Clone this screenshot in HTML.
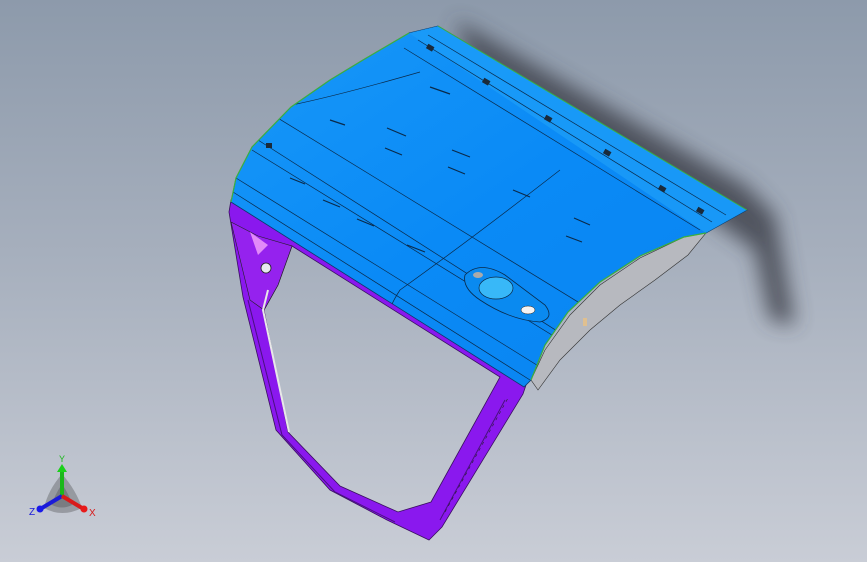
<!DOCTYPE html>
<html><head><style>
html,body{margin:0;padding:0;width:867px;height:562px;overflow:hidden}
body{background:linear-gradient(180deg,#8d9aab 0%,#a6afbd 45%,#c9cdd6 100%)}
svg{position:absolute;left:0;top:0}
</style></head><body>
<svg width="867" height="562" viewBox="0 0 867 562">
<defs>
<filter id="b" x="-50%" y="-50%" width="200%" height="200%"><feGaussianBlur stdDeviation="10"/></filter>
<linearGradient id="pg" x1="0" y1="0" x2="1" y2="1">
<stop offset="0" stop-color="#1898f8"/><stop offset="0.5" stop-color="#0a8af6"/><stop offset="1" stop-color="#0a84f0"/></linearGradient>
<clipPath id="pc"><path d="M231 202 L236 178 L252 147 L291 107 L330 80 L363 60 L409 33 L438 26 L747 210 L706 233 L684 237 L640 256 L600 282 L568 312 L545 345 L531 380 L524 387 Z"/></clipPath>
</defs>
<path d="M455 20 L745 185 L775 215 L795 325 L770 320 L755 250 L720 225 L470 60 Z" fill="#3a3e46" opacity="0.8" filter="url(#b)"/>
<path fill-rule="evenodd" fill="#8a18ee" stroke="#3a1060" stroke-width="0.8" d="M229 212 L231 200 L526 385 L523 394 L442 527 L429 540 L387 520 L330 490 L276 430 L243 297 Z M292 246 L500 377 L431 502 L398 512 L340 486 L288 432 L264 310 L278 285 Z"/>
<path d="M231 222 L258 236 L292 246 L278 285 L264 310 L250 300 Z" fill="#9522ee" stroke="#222" stroke-width="0.6"/>
<path d="M250 232 L268 245 L258 255 Z" fill="#e28af8"/>
<circle cx="266" cy="268" r="5" fill="#e8e8f0" stroke="#222" stroke-width="0.8"/>
<path d="M268 290 L263 310 L289 432" fill="none" stroke="#e8e8e8" stroke-width="2"/>
<path d="M248 300 L282 435 L335 492 L395 522" fill="none" stroke="#4a1080" stroke-width="1"/>
<path d="M440 520 L505 400" fill="none" stroke="#4a1080" stroke-width="1"/>
<path d="M445 512 L508 398" fill="none" stroke="#222" stroke-width="0.6" stroke-dasharray="3 4"/>
<path d="M706 233 L684 237 L640 258 L600 285 L570 315 L545 350 L531 380 L538 390 L560 360 L590 330 L620 305 L655 280 L688 255 Z" fill="#b7b9bf" stroke="#333" stroke-width="0.6"/>
<rect x="583" y="318" width="4" height="8" fill="#e0c090"/>
<path d="M231 202 L236 178 L252 147 L291 107 L330 80 L363 60 L409 33 L438 26 L747 210 L706 233 L684 237 L640 256 L600 282 L568 312 L545 345 L531 380 L524 387 Z" fill="url(#pg)" stroke="#0a3a6a" stroke-width="0.8"/>
<g clip-path="url(#pc)">
<path d="M409 33 L438 26 L747 210 L706 233 Z" fill="#1c9cf8" opacity="0.8"/>
<g stroke="#0a2a4a" stroke-width="0.7" fill="none">
<path d="M418 40 L712 222"/><path d="M428 35 L726 215"/><path d="M404 48 L700 230"/>
<path d="M258 140 L665 400"/>
<path d="M252 150 L560 340 M236 178 L540 367 M233 192 L530 380"/>
<path d="M268 112 L640 340"/>
<path d="M292 105 Q340 95 420 72"/>
<path d="M560 170 Q470 240 400 290 Q380 320 395 330"/>
</g>
<g stroke="#0a2a4a" stroke-width="1.2">
<path d="M330 120 L345 125 M387 128 L406 136 M385 148 L402 155 M452 150 L470 157 M448 167 L465 174 M290 178 L305 184 M323 200 L340 207 M357 219 L374 226 M407 245 L425 252 M513 190 L530 197 M574 218 L590 225 M566 236 L582 242 M430 87 L450 94"/>
</g>
</g>
<path d="M231 202 L236 178 L252 147 L291 107 L330 80 L363 60 L409 33" fill="none" stroke="#3cb040" stroke-width="1.2"/>
<path d="M438 26 L747 210" stroke="#3cb040" stroke-width="1"/>
<path d="M706 233 L684 237 L640 256 L600 282 L568 312 L545 345 L531 380" fill="none" stroke="#3cb040" stroke-width="1.2"/>
<g fill="#1a2a3a">
<rect x="427" y="45" width="7" height="5" transform="rotate(30 430 47)"/>
<rect x="483" y="79" width="7" height="5" transform="rotate(30 486 81)"/>
<rect x="545" y="116" width="7" height="5" transform="rotate(30 548 118)"/>
<rect x="604" y="150" width="7" height="5" transform="rotate(30 607 152)"/>
<rect x="659" y="186" width="7" height="5" transform="rotate(30 662 188)"/>
<rect x="697" y="208" width="7" height="5" transform="rotate(30 700 210)"/>
<rect x="266" y="143" width="6" height="5"/>
</g>
<path d="M465 275 Q480 260 505 275 L545 305 Q555 318 540 322 Q510 320 480 300 Q462 288 465 275 Z" fill="#0a8af0" stroke="#0a2a4a" stroke-width="0.8"/>
<ellipse cx="496" cy="288" rx="17" ry="11" fill="#38b8f8" stroke="#0a2a4a" stroke-width="0.7"/>
<ellipse cx="478" cy="275" rx="5" ry="3" fill="#aaa"/>
<ellipse cx="528" cy="310" rx="7" ry="4" fill="#f4f4f4" stroke="#222" stroke-width="0.5"/>
</svg>
<svg width="867" height="562" viewBox="0 0 867 562">
<path d="M62 474 Q48 490 44 508 Q62 518 82 508 Q76 490 62 474 Z" fill="#333" opacity="0.3"/>
<path d="M62 484 Q54 496 52 505 Q62 510 72 505 Q70 496 62 484 Z" fill="#222" opacity="0.25"/>
<line x1="62" y1="496" x2="62" y2="470" stroke="#1bb81b" stroke-width="4"/>
<path d="M57 472 L62 464 L67 472 Z" fill="#1bd01b"/>
<line x1="62" y1="496" x2="42" y2="508" stroke="#1a1ad8" stroke-width="4"/>
<circle cx="40" cy="509" r="3.5" fill="#1a1ae8"/>
<line x1="62" y1="496" x2="82" y2="508" stroke="#d81a1a" stroke-width="4"/>
<circle cx="84" cy="509" r="3.5" fill="#e81a1a"/>
<text x="59" y="462" font-family="Liberation Sans,sans-serif" font-size="9" fill="#1bb81b">Y</text>
<text x="29" y="515" font-family="Liberation Sans,sans-serif" font-size="10" fill="#1a1ad8">Z</text>
<text x="89" y="516" font-family="Liberation Sans,sans-serif" font-size="10" fill="#d81a1a">X</text>
</svg>
</body></html>
